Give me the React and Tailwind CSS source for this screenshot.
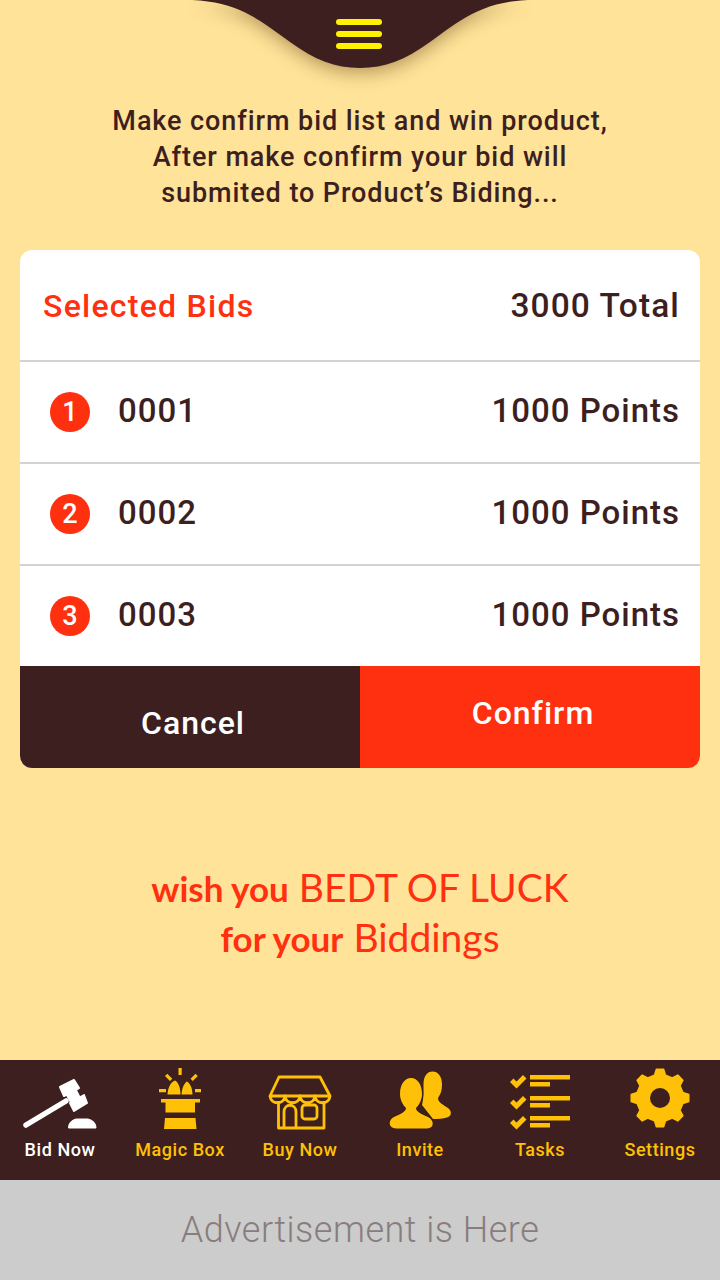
const gold = "#ffc107";

function gearPath(cx, cy, R, r, n) {
  const pts = [];
  for (let i = 0; i < n; i++) {
    const a = (i * 2 * Math.PI) / n - Math.PI / 2;
    const s = (2 * Math.PI) / n;
    const p = (rad, ang) => `${(cx + rad * Math.cos(ang)).toFixed(2)} ${(cy + rad * Math.sin(ang)).toFixed(2)}`;
    pts.push(p(r, a - s * 0.3), p(R, a - s * 0.16), p(R, a + s * 0.16), p(r, a + s * 0.3));
  }
  return `M${pts.join("L")}Z`;
}

const Gavel = () => (
  <svg width="120" height="70" viewBox="0 0 120 70" fill="#fff">
    <path d="M26 60 66 36" stroke="#fff" strokeWidth="5.500" strokeLinecap="round" />
    <path d="M63 25 74 19 83 37 73 43Z" />
    <path d="M60 22 74 15 79 23 64 31Z" stroke="#fff" strokeWidth="2" strokeLinejoin="round" />
    <path d="M70 38 84 30 87 38 74 46Z" stroke="#fff" strokeWidth="2" strokeLinejoin="round" />
    <path d="M68.500 63Q68.500 56 76 54H88Q96 56 96 63Z" stroke="#fff" strokeWidth="1" strokeLinejoin="round" />
  </svg>
);
const MagicBox = () => (
  <svg width="120" height="70" viewBox="0 0 120 70" fill={gold}>
    <path d="M58.500 3h3.200v7h-3.200zM45 11l2.300-2.300 5 5-2.300 2.300zM75.500 8.700l2.300 2.300-5 5-2.300-2.300zM39 24h7v3.300h-7zM75 24h6v3.300h-6z" />
    <path d="M47.500 29.500C48 22 51 17 55 15.500 58.500 17 60.500 23 60.500 29.500ZM61.500 29.500C62 23 64 18.500 67 16.500 70 18.500 72.500 23 72.500 29.500Z" />
    <path d="M41 34h39v3.500h-39zM45.500 37.500h29.500v10h-29.500zM45 53h30.500l1 11h-32.500z" />
  </svg>
);
const Shop = () => (
  <svg width="120" height="70" viewBox="0 0 120 70" fill="none" stroke={gold} strokeWidth="2.800" strokeLinejoin="round">
    <path d="M39 12H80L90 31H30Z" />
    <path d="M30 31C31 40 44 40 45 31 46 40 59 40 60 31 61 40 74 40 75 31 76 40 89 40 90 31" />
    <path d="M38.500 36V63H84V36" />
    <path d="M44 63V47C44 38 56 38 56 47V63" />
    <rect x="62" y="40" width="15" height="14" rx="3" />
  </svg>
);
const Invite = () => (
  <svg width="120" height="70" viewBox="0 0 120 70">
    <path d="M63.500 20C63.500 11 67 6.500 72.500 6.500 78 6.500 82 11 82 20 82 26 80 30 78 33 78 38 84 40 88 43 92 46 92 51 87 52.500 83 53.500 78 54 73 54L62 40C64 32 63.500 26 63.500 20Z" fill={gold} />
    <path d="M51 13C57 13 62 19 62 29 62 35 59 40 56 43 56 47 62 49 68 52 74 55 75 63 67 63.500H36C28 63 28 55 34 52 40 49 46 47 46 43 43 40 40 35 40 29 40 19 45 13 51 13Z" fill={gold} stroke="#3d1f1f" strokeWidth="2.500" paintOrder="stroke" />
  </svg>
);
const Tasks = () => (
  <svg width="120" height="70" viewBox="0 0 120 70" fill={gold}>
    {[10, 31, 51].map((y) => (
      <g key={y}>
        <path d={`M30 ${y + 7}l3.500-3.500 3 3 6.500-6.500 3.500 3.500-10 10z`} />
        <rect x="50" y={y} width="40" height="4.500" />
        <rect x="50" y={y + 7} width="20" height="4.500" />
      </g>
    ))}
  </svg>
);
const Gear = () => (
  <svg width="120" height="70" viewBox="0 0 120 70">
    <path d={gearPath(60, 33, 29, 23.500, 8)} fill={gold} stroke={gold} strokeWidth="1.500" strokeLinejoin="round" />
    <circle cx="60" cy="33" r="10" fill="#3d1f1f" />
  </svg>
);

const navItems = [
  { label: "Bid Now", Icon: Gavel, active: true },
  { label: "Magic Box", Icon: MagicBox },
  { label: "Buy Now", Icon: Shop },
  { label: "Invite", Icon: Invite },
  { label: "Tasks", Icon: Tasks },
  { label: "Settings", Icon: Gear },
];

const bids = [
  { n: 1, code: "0001", h: "h-[102px] border-b-2" },
  { n: 2, code: "0002", h: "h-[102px] border-b-2" },
  { n: 3, code: "0003", h: "h-[100px]" },
];

export default function App() {
  return (
    <div className="w-[720px] h-[1280px] flex flex-col bg-[#ffe398] overflow-hidden font-['Roboto',sans-serif] text-[#3d1f1f]">
      <div className="h-[103px] shrink-0 flex justify-center">
        <svg width="400" height="103" viewBox="160 0 400 103" className="drop-shadow-[0_5px_9px_rgba(90,60,20,0.45)]">
          <path d="M192 0C240 2 262 22 290 42 315 60 335 68 360 68 385 68 405 60 430 42 458 22 480 2 528 0Z" fill="#3d1f1f" />
          <rect x="336" y="19" width="46" height="6" rx="3" fill="#fff200" />
          <rect x="336" y="31" width="46" height="6" rx="3" fill="#fff200" />
          <rect x="336" y="43" width="46" height="6" rx="3" fill="#fff200" />
        </svg>
      </div>

      <p className="text-center text-[27px] leading-[36px] font-medium tracking-[0.92px]">
        Make confirm bid list and win product,
        <br />
        After make confirm your bid will
        <br />
        submited to Product’s Biding...
      </p>

      <div className="mx-5 mt-[39px] h-[518px] shrink-0 rounded-xl bg-white overflow-hidden flex flex-col">
        <div className="h-[112px] shrink-0 border-b-2 border-[#d4d2d2] flex items-center justify-between pl-[23px] pr-5 pt-[2px] font-medium text-[32px] tracking-[1.25px]">
          <span className="text-[#ff3010]">Selected Bids</span>
          <span className="text-[33.500px] tracking-[1.1px]">3000 Total</span>
        </div>
        {bids.map((b) => (
          <div key={b.n} className={`${b.h} shrink-0 border-[#d4d2d2] flex items-center pl-[30px] pr-5 font-medium text-[33px] tracking-[1px]`}>
            <span className="w-10 h-10 rounded-full bg-[#ff3010] text-white text-[27px] tracking-normal flex items-center justify-center">{b.n}</span>
            <span className="ml-7 flex-1 pb-[2px]">{b.code}</span>
            <span className="pb-[2px]">1000 Points</span>
          </div>
        ))}
        <div className="h-[102px] shrink-0 flex text-white font-medium text-[32px] tracking-[1px]">
          <div className="w-1/2 bg-[#3d1f1f] flex items-center justify-center pt-3 pl-[6px]">Cancel</div>
          <div className="w-1/2 bg-[#ff3010] flex items-center justify-center pb-2 pl-[6px]">Confirm</div>
        </div>
      </div>

      <div className="flex-1 flex flex-col items-center justify-start pt-[95px] text-[#ff3010] text-[39px] leading-[49px] font-['Lato',sans-serif]">
        <p><span className="font-bold text-[35px]">wish you</span> BEDT OF LUCK</p>
        <p><span className="font-bold text-[35px]">for your</span> Biddings</p>
      </div>

      <nav className="h-[120px] shrink-0 bg-[#3d1f1f] flex">
        {navItems.map(({ label, Icon, active }) => (
          <div key={label} className="w-[120px] flex flex-col items-center pt-[5px]">
            <Icon />
            <span className={`text-[18px] leading-[24px] font-medium tracking-[0.55px] mt-[3px] ${active ? "text-white" : "text-[#ffc107]"}`}>{label}</span>
          </div>
        ))}
      </nav>

      <div className="h-[100px] shrink-0 bg-[#cccccc] flex items-center justify-center text-[36px] font-light text-[#887d7d] tracking-[0.5px]">
        Advertisement is Here
      </div>
    </div>
  );
}
